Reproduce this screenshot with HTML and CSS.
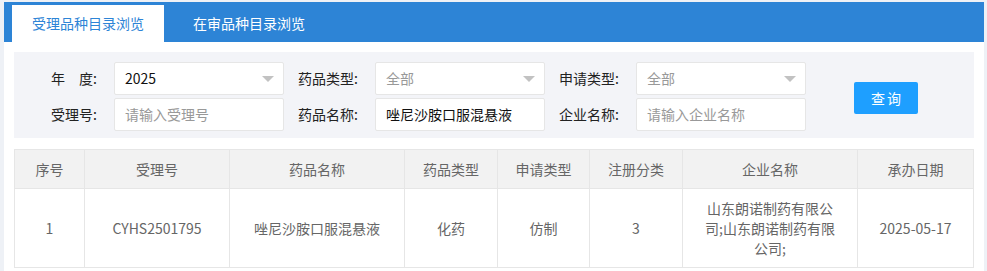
FILE: index.html
```html
<!DOCTYPE html>
<html lang="zh-CN">

<head>
    <meta http-equiv="Content-Type" content="text/html;charset=UTF-8">
    <title>受理品种目录浏览</title>
    <link rel="stylesheet" href="styles.css">
</head>

<body>
    <div class="page">
        <ul class="tabs">
            <li class="tab tab-active">受理品种目录浏览</li>
            <li class="tab">在审品种目录浏览</li>
        </ul>

        <div class="content">
            <form class="filter">
                <div class="filter-grid">
                    <label class="filter-label">年&emsp;度:</label>
                    <div class="field field-select">2025<span class="caret"></span></div>
                    <label class="filter-label">药品类型:</label>
                    <div class="field field-select is-empty">全部<span class="caret"></span></div>
                    <label class="filter-label">申请类型:</label>
                    <div class="field field-select is-empty">全部<span class="caret"></span></div>

                    <label class="filter-label">受理号:</label>
                    <div class="field is-empty">请输入受理号</div>
                    <label class="filter-label">药品名称:</label>
                    <div class="field">唑尼沙胺口服混悬液</div>
                    <label class="filter-label">企业名称:</label>
                    <div class="field is-empty">请输入企业名称</div>
                </div>
                <button type="button" class="search-btn">查询</button>
            </form>

            <table class="result-table">
                <colgroup>
                    <col style="width: 70px">
                    <col style="width: 145px">
                    <col style="width: 175px">
                    <col style="width: 93px">
                    <col style="width: 92px">
                    <col style="width: 93px">
                    <col style="width: 175px">
                    <col>
                </colgroup>
                <thead>
                    <tr>
                        <th>序号</th>
                        <th>受理号</th>
                        <th>药品名称</th>
                        <th>药品类型</th>
                        <th>申请类型</th>
                        <th>注册分类</th>
                        <th>企业名称</th>
                        <th>承办日期</th>
                    </tr>
                </thead>
                <tbody>
                    <tr>
                        <td>1</td>
                        <td>CYHS2501795</td>
                        <td>唑尼沙胺口服混悬液</td>
                        <td>化药</td>
                        <td>仿制</td>
                        <td>3</td>
                        <td>山东朗诺制药有限公司;山东朗诺制药有限公司;</td>
                        <td>2025-05-17</td>
                    </tr>
                </tbody>
            </table>
        </div>
    </div>
</body>

</html>
```

FILE: styles.css
```css
body {
    margin: 0;
    background-color: #eef1f6;
    color: #333333;
    font-family: "Noto Sans CJK SC", "Liberation Sans", sans-serif;
    font-size: 14px;
}

.page {
    margin: 2px 3px 0 4px;
    min-height: 269px;
    background-color: #ffffff;
}

.tabs {
    display: flex;
    align-items: flex-end;
    height: 40px;
    margin: 0;
    padding: 0 0 0 8px;
    list-style: none;
    background-color: #2d84d6;
    box-sizing: border-box;
}

.tab {
    height: 37px;
    line-height: 37px;
    padding: 0 20px 0 29px;
    color: #ffffff;
}

.tab-active {
    padding: 0 20px;
    background-color: #ffffff;
    color: #2d84d6;
}

.content {
    padding: 10px 10px 0;
}

.filter {
    display: flex;
    align-items: center;
    padding: 10px 0 7px 17px;
    background-color: #f3f4f8;
}

.filter-grid {
    display: grid;
    grid-template-columns: 83px 170px 91px 170px 91px 170px;
    row-gap: 3px;
}

.filter-label {
    padding-right: 17px;
    line-height: 33px;
    text-align: right;
    color: #222222;
}

.field {
    position: relative;
    height: 33px;
    line-height: 31px;
    padding: 0 10px;
    border: 1px solid #e6e6e6;
    border-radius: 2px;
    background-color: #ffffff;
    box-sizing: border-box;
    color: #111111;
}

.field.is-empty {
    color: #999999;
}

.caret {
    position: absolute;
    top: 13px;
    right: 9px;
    border-top: 6px solid #c2c2c2;
    border-left: 6px solid transparent;
    border-right: 6px solid transparent;
}

.search-btn {
    width: 64px;
    height: 32px;
    margin: 3px 0 0 48px;
    padding: 0;
    border: none;
    border-radius: 2px;
    background-color: #1e9fff;
    color: #ffffff;
    font-family: inherit;
    font-size: 14px;
    letter-spacing: 2px;
    text-indent: 2px;
}

.result-table {
    width: 960px;
    margin-top: 11px;
    border-collapse: collapse;
    table-layout: fixed;
    color: #666666;
}

.result-table th,
.result-table td {
    padding: 9px 18px;
    line-height: 20px;
    border: 1px solid #e6e6e6;
    text-align: center;
    vertical-align: middle;
    font-weight: normal;
}

.result-table th {
    padding: 9px 8px;
    background-color: #f2f2f2;
}
```
